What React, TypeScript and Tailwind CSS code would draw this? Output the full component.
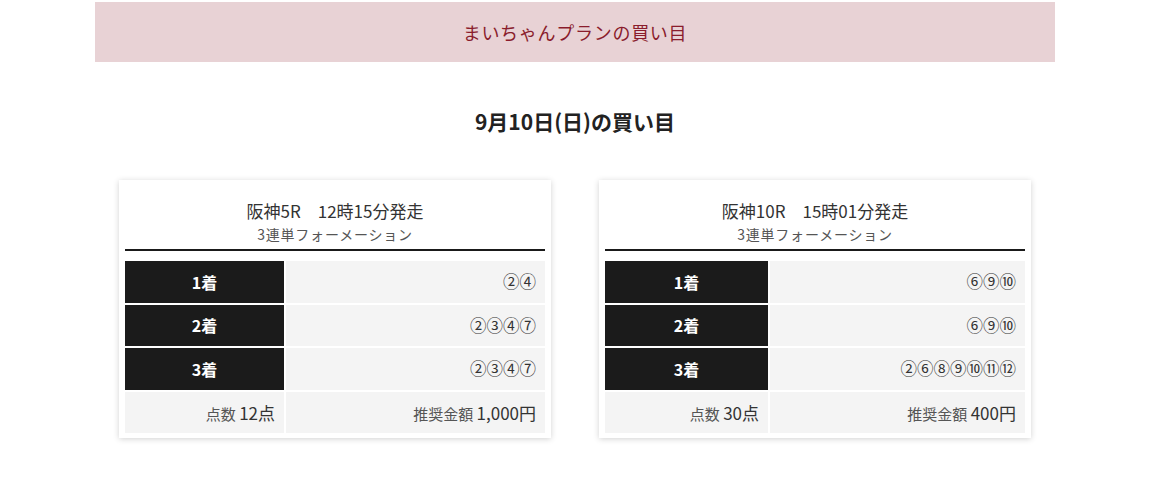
import React from 'react';

interface Race {
    title: string;
    type: string;
    leftWidth: string;
    rows: { label: string; picks: string }[];
    points: string;
    amount: string;
}

const races: Race[] = [
    {
        title: '阪神5R\u300012時15分発走',
        type: '3連単フォーメーション',
        leftWidth: 'w-[159px]',
        rows: [
            { label: '1着', picks: '②④' },
            { label: '2着', picks: '②③④⑦' },
            { label: '3着', picks: '②③④⑦' },
        ],
        points: '12点',
        amount: '1,000円',
    },
    {
        title: '阪神10R\u300015時01分発走',
        type: '3連単フォーメーション',
        leftWidth: 'w-[163px]',
        rows: [
            { label: '1着', picks: '⑥⑨⑩' },
            { label: '2着', picks: '⑥⑨⑩' },
            { label: '3着', picks: '②⑥⑧⑨⑩⑪⑫' },
        ],
        points: '30点',
        amount: '400円',
    },
];

function RaceCard({ race }: { race: Race }) {
    return (
        <div className="bg-white shadow-[0_1px_6px_rgba(0,0,0,0.18)] px-[4px] pt-[19px] pb-[3px]">
            {/* Heading */}
            <div className="mx-[2px] border-b-2 border-[#1a1a1a] pb-[4px] text-center">
                <p className="text-[17px] leading-[24px] text-[#333]">{race.title}</p>
                <p className="text-[14px] leading-[22px] tracking-[0.8px] text-[#555]">{race.type}</p>
            </div>

            {/* Picks table */}
            <table className="mt-[8px] w-full border-separate border-spacing-[2px]">
                <tbody>
                    {race.rows.map((row) => (
                        <tr key={row.label} className="h-[41.5px]">
                            <td className={`${race.leftWidth} bg-[#1b1b1b] text-center text-[16px] font-bold text-white`}>
                                {row.label}
                            </td>
                            <td className="bg-[#f4f4f4] pr-[9px] text-right text-[16.5px] text-[#333]">{row.picks}</td>
                        </tr>
                    ))}
                    <tr className="h-[41.5px]">
                        <td className="bg-[#f4f4f4] pr-[9px] text-right text-[#333]">
                            <span className="text-[15px] text-[#555]">点数 </span>
                            <span className="text-[17px]">{race.points}</span>
                        </td>
                        <td className="bg-[#f4f4f4] pr-[9px] text-right text-[#333]">
                            <span className="text-[15px] text-[#555]">推奨金額 </span>
                            <span className="text-[17px]">{race.amount}</span>
                        </td>
                    </tr>
                </tbody>
            </table>
        </div>
    );
}

export default function App() {
    return (
        <div className="min-h-[487px] bg-white font-['Noto_Sans_CJK_JP',sans-serif]">
            <div className="ml-[95px] w-[960px] pt-[2px]">
                {/* Plan banner */}
                <div className="flex h-[60px] items-center justify-center bg-[#e8d2d5]">
                    <h2 className="text-[18px] tracking-[0.04em] text-[#8a1c2c]">まいちゃんプランの買い目</h2>
                </div>

                <h3 className="mt-[45px] text-center text-[21px] font-bold leading-[28px] text-[#222]">
                    9月10日(日)の買い目
                </h3>

                <div className="mt-[45px] grid grid-cols-2 gap-[48px] px-[24px]">
                    {races.map((race) => (
                        <RaceCard key={race.title} race={race} />
                    ))}
                </div>
            </div>
        </div>
    );
}
